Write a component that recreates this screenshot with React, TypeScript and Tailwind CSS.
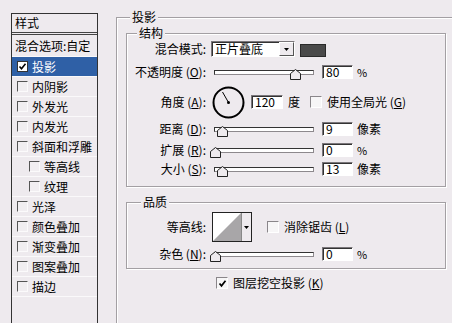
import React from "react";

function LeftCheck({ checked = false }: { checked?: boolean }) {
  if (checked) {
    return (
      <div className="w-[11px] h-[11px] shrink-0 bg-white border border-[#333] flex items-center justify-center">
        <svg width="9" height="9" viewBox="0 0 9 9">
          <path d="M1.5 4.5 L3.5 6.8 L7.5 1.8" stroke="#000" strokeWidth="1.6" fill="none" />
        </svg>
      </div>
    );
  }
  return (
    <div className="w-[11px] h-[11px] shrink-0 border border-t-[#555] border-l-[#555] border-b-[#fbfafb] border-r-[#fbfafb] bg-[#f1eef1]" />
  );
}

function Check({ checked = false }: { checked?: boolean }) {
  return (
    <div className="w-[12px] h-[12px] shrink-0 border border-t-[#8a868a] border-l-[#8a868a] border-b-[#fff] border-r-[#fff] bg-[#f7f6f7] flex items-center justify-center">
      {checked && (
        <svg width="9" height="9" viewBox="0 0 9 9">
          <path d="M1.5 4.5 L3.5 6.8 L7.5 1.8" stroke="#000" strokeWidth="1.7" fill="none" />
        </svg>
      )}
    </div>
  );
}

function Slider({ pos }: { pos: number }) {
  return (
    <div className="relative w-[100px] h-[14px] shrink-0 flex items-center">
      <div className="w-full h-[5px] bg-white border border-t-[#333] border-l-[#333] border-b-[#8d898d] border-r-[#8d898d]" />
      <svg className="absolute top-[4px]" style={{ left: pos }} width="11" height="11" viewBox="0 0 11 11">
        <polygon points="0.5,10.5 0.5,4.5 5.5,0.5 10.5,4.5 10.5,10.5" fill="#eeeaee" stroke="#222" strokeWidth="1" />
      </svg>
    </div>
  );
}

function Input({ value, w = 31 }: { value: string; w?: number }) {
  return (
    <div
      className="h-[14px] shrink-0 bg-white border border-t-[#7a767a] border-l-[#7a767a] border-b-[#fff] border-r-[#fff] shadow-[inset_1px_1px_0_#333] pl-[3px] flex items-center text-[12px] leading-[12px]"
      style={{ width: w }}
    >
      {value}
    </div>
  );
}

function Label({ children }: { children: React.ReactNode }) {
  return <div className="w-[79px] shrink-0 text-right whitespace-nowrap">{children}</div>;
}

function SliderRow({
  label,
  acc,
  pos,
  value,
  unit,
  mt,
}: {
  label: string;
  acc: string;
  pos: number;
  value: string;
  unit: string;
  mt: string;
}) {
  return (
    <div className={`flex items-center h-[14px] ${mt}`}>
      <Label>
        {label} (<u>{acc}</u>):
      </Label>
      <div className="ml-[8px]">
        <Slider pos={pos} />
      </div>
      <div className="ml-[8px]">
        <Input value={value} />
      </div>
      <div className={`ml-[4px] ${unit === "%" ? "text-[11px]" : ""}`}>{unit}</div>
    </div>
  );
}

function Legend({ children, left }: { children: React.ReactNode; left: string }) {
  return (
    <span className={`absolute top-[-8px] ${left} px-[2px] bg-[#eeeaee] leading-[14px]`}>{children}</span>
  );
}

const rows: { name: string; sub?: boolean; selected?: boolean }[] = [
  { name: "投影", selected: true },
  { name: "内阴影" },
  { name: "外发光" },
  { name: "内发光" },
  { name: "斜面和浮雕" },
  { name: "等高线", sub: true },
  { name: "纹理", sub: true },
  { name: "光泽" },
  { name: "颜色叠加" },
  { name: "渐变叠加" },
  { name: "图案叠加" },
  { name: "描边" },
];

function LeftPanel() {
  return (
    <div className="w-[87px] h-[320px] shrink-0 border border-[#333] flex flex-col">
      <div className="h-[21px] pl-[3px] flex items-center border-b-[3px] border-double border-[#444]">样式</div>
      <div className="h-[22px] pl-[3px] flex items-center border-b border-[#faf9fa] whitespace-nowrap">混合选项:自定</div>
      {rows.map((r) => (
        <div
          key={r.name}
          className={`h-[20px] flex items-center border-b whitespace-nowrap ${
            r.selected ? "bg-[#2f60a6] text-white border-[#faf9fa]" : "border-[#faf9fa]"
          } ${r.sub ? "pl-[17px]" : "pl-[5px]"}`}
        >
          <LeftCheck checked={r.selected} />
          <span className={r.sub ? "ml-[4px]" : "ml-[4px]"}>{r.name}</span>
        </div>
      ))}
    </div>
  );
}

function Dial() {
  return (
    <svg width="33" height="33" viewBox="0 0 33 33" className="shrink-0">
      <circle cx="16.5" cy="16.5" r="15" stroke="#000" strokeWidth="2" fill="none" />
      <line x1="16.5" y1="16.5" x2="10.5" y2="6" stroke="#000" strokeWidth="1" />
      <circle cx="16.5" cy="16.5" r="1.5" fill="#000" />
    </svg>
  );
}

function Dropdown() {
  return (
    <div className="w-[84px] h-[16px] shrink-0 bg-white border border-t-[#7a767a] border-l-[#7a767a] border-b-[#fff] border-r-[#fff] shadow-[inset_1px_1px_0_#333] flex items-center">
      <span className="pl-[3px] flex-1 leading-[14px]">正片叠底</span>
      <div className="w-[15px] h-[14px] bg-[#eeeaee] border border-t-[#fff] border-l-[#fff] border-b-[#555] border-r-[#555] flex items-center justify-center">
        <svg width="5" height="3" viewBox="0 0 5 3">
          <polygon points="0,0 5,0 2.5,3" fill="#000" />
        </svg>
      </div>
    </div>
  );
}

function Contour() {
  return (
    <div className="flex h-[30px] shrink-0 border border-[#222]">
      <svg width="28" height="28" viewBox="0 0 28 28">
        <rect width="28" height="28" fill="#fff" />
        <polygon points="0,28 28,0 28,28" fill="#a8a6a8" />
      </svg>
      <div className="w-[10px] h-full bg-[#eeeaee] border-l border-[#888] flex items-center justify-center">
        <svg width="5" height="3" viewBox="0 0 5 3">
          <polygon points="0,0 5,0 2.5,3" fill="#000" />
        </svg>
      </div>
    </div>
  );
}

const groupBox =
  "relative w-[320px] border border-[#a39fa3] shadow-[inset_1px_1px_0_#fff,1px_1px_0_#fff] flex flex-col";

export default function App() {
  return (
    <div className="w-[452px] h-[323px] overflow-hidden bg-[#eeeaee] flex items-start pl-[11px] pt-[13px] font-['Noto_Sans_CJK_SC',sans-serif] text-[12px] leading-[14px] text-black">
      <LeftPanel />
      <div className="relative ml-[18px] mt-[4px] w-[360px] h-[320px] shrink-0 border border-[#a39fa3] shadow-[inset_1px_1px_0_#fff,1px_1px_0_#fff] pl-[9px] pt-[15px] flex flex-col">
        <Legend left="left-[13px]">投影</Legend>

        <div className={`${groupBox} pt-[7px] pb-[10px]`}>
          <Legend left="left-[10px]">结构</Legend>
          <div className="flex items-center h-[16px]">
            <Label>混合模式:</Label>
            <div className="ml-[5px]">
              <Dropdown />
            </div>
            <div className="ml-[5px] mt-[2px] w-[26px] h-[13px] bg-[#4a4a4a] border border-[#2a2a2a]" />
          </div>
          <SliderRow label="不透明度" acc="O" pos={76} value="80" unit="%" mt="mt-[8px]" />
          <div className="flex items-center h-[32px] mt-[7px]">
            <Label>
              角度 (<u>A</u>):
            </Label>
            <div className="ml-[6px]">
              <Dial />
            </div>
            <div className="ml-[6px]">
              <Input value="120" w={32} />
            </div>
            <div className="ml-[5px]">度</div>
            <div className="ml-[10px]">
              <Check />
            </div>
            <div className="ml-[5px] whitespace-nowrap">
              使用全局光 (<u>G</u>)
            </div>
          </div>
          <SliderRow label="距离" acc="D" pos={3} value="9" unit="像素" mt="mt-[4px]" />
          <SliderRow label="扩展" acc="R" pos={-4} value="0" unit="%" mt="mt-[7px]" />
          <SliderRow label="大小" acc="S" pos={3} value="13" unit="像素" mt="mt-[5px]" />
        </div>

        <div className={`${groupBox} mt-[15px] pt-[9px] pb-[7px]`}>
          <Legend left="left-[14px]">品质</Legend>
          <div className="flex items-center h-[30px]">
            <Label>等高线:</Label>
            <div className="ml-[6px]">
              <Contour />
            </div>
            <div className="ml-[15px]">
              <Check />
            </div>
            <div className="ml-[5px] whitespace-nowrap">
              消除锯齿 (<u>L</u>)
            </div>
          </div>
          <SliderRow label="杂色" acc="N" pos={-4} value="0" unit="%" mt="mt-[5px]" />
        </div>

        <div className="flex items-center h-[14px] mt-[7px] pl-[90px]">
          <Check checked />
          <span className="ml-[5px] whitespace-nowrap">
            图层挖空投影 (<u>K</u>)
          </span>
        </div>
      </div>
    </div>
  );
}
